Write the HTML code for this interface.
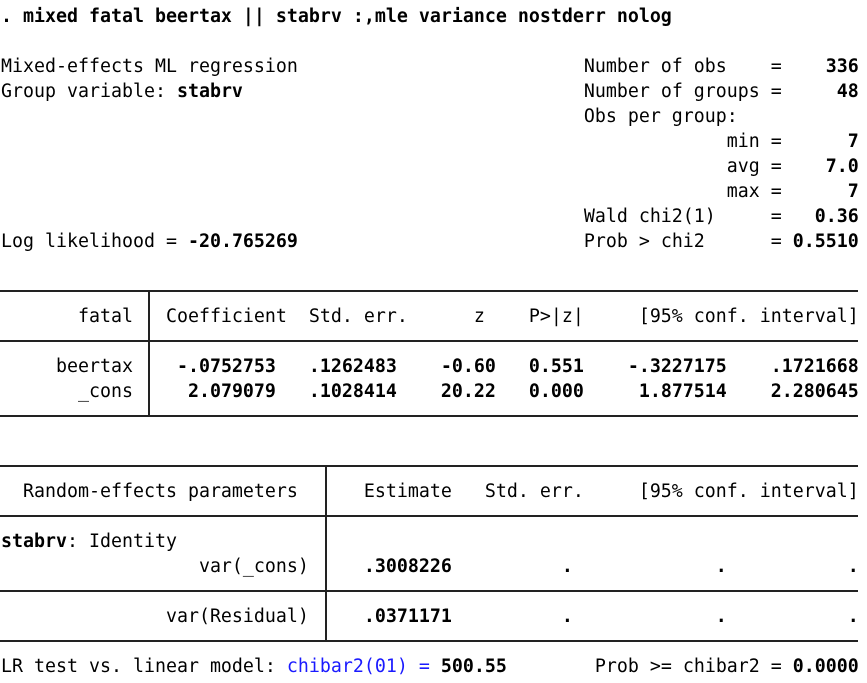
<!DOCTYPE html>
<html><head><meta charset="utf-8"><style>
html,body{margin:0;padding:0;background:#fff;width:867px;height:683px;overflow:hidden;position:relative}
pre{position:absolute;left:1px;top:4px;margin:0;font-family:"DejaVu Sans Mono","Liberation Mono",monospace;font-size:18.27px;line-height:25px;color:#000;white-space:pre}
b{font-weight:bold}
.bl{color:#1a1aff}
.h{position:absolute;left:0;width:858px;height:1.5px;background:#222}
.v{position:absolute;width:1.5px;background:#222}
</style></head><body>
<pre><b>. mixed fatal beertax || stabrv :,mle variance nostderr nolog</b>

Mixed-effects ML regression                          Number of obs    =    <b>336</b>
Group variable: <b>stabrv</b>                               Number of groups =     <b>48</b>
                                                     Obs per group:
                                                                  min =      <b>7</b>
                                                                  avg =    <b>7.0</b>
                                                                  max =      <b>7</b>
                                                     Wald chi2(1)     =   <b>0.36</b>
Log likelihood = <b>-20.765269</b>                          Prob &gt; chi2      = <b>0.5510</b>


       fatal   Coefficient  Std. err.      z    P&gt;|z|     [95% conf. interval]

     beertax    <b>-.0752753   .1262483    -0.60   0.551    -.3227175    .1721668</b>
       _cons     <b>2.079079   .1028414    20.22   0.000     1.877514    2.280645</b>



  Random-effects parameters      Estimate   Std. err.     [95% conf. interval]

<b>stabrv</b>: Identity
                  var(_cons)     <b>.3008226          .             .           .</b>

               var(Residual)     <b>.0371171          .             .           .</b>

LR test vs. linear model: <span class="bl">chibar2(01) = </span><b>500.55</b>        Prob &gt;= chibar2 = <b>0.0000</b></pre>
<div class="h" style="top:290px"></div>
<div class="h" style="top:340px"></div>
<div class="h" style="top:415px"></div>
<div class="v" style="left:148px;top:290px;height:126px"></div>
<div class="h" style="top:465px"></div>
<div class="h" style="top:515px"></div>
<div class="h" style="top:590px"></div>
<div class="h" style="top:640px"></div>
<div class="v" style="left:325px;top:465px;height:176px"></div>
</body></html>
